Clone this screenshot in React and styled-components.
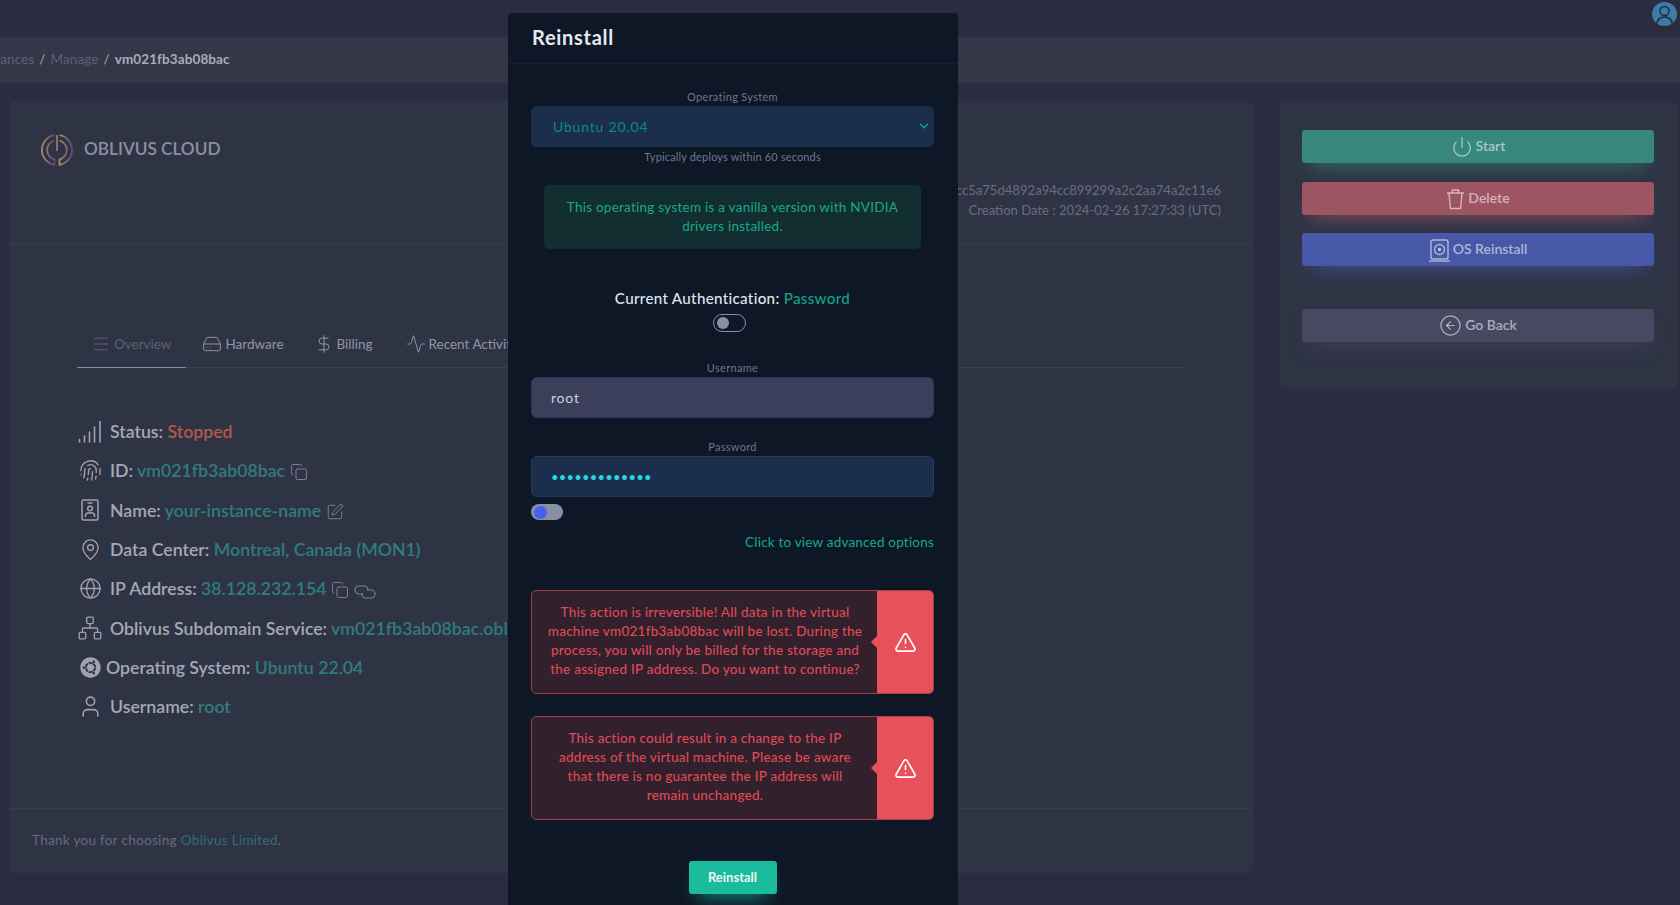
import React from 'react';
import styled, {createGlobalStyle} from 'styled-components';
import {
   Menu, HardDrive, DollarSign, Activity, Copy, SquarePen, MapPin, Globe, Network,
   User, Power, CircleArrowLeft, TriangleAlert, ChevronDown, Fingerprint
} from 'lucide-react';
import {FaUbuntu} from 'react-icons/fa';

const GlobalStyle = createGlobalStyle`
   html, body {
      margin: 0;
      padding: 0;
      background: #2a2c3e;
      font-family: Lato, 'Open Sans', sans-serif;
   }
   * {
      box-sizing: border-box;
   }
`;

const Page = styled.div`
   position: relative;
   width: 1680px;
   height: 905px;
   overflow: hidden;
   background: #2b2c3f;
`;

const TopBar = styled.header`
   display: flex;
   justify-content: flex-end;
   align-items: flex-start;
   height: 37px;
   padding: 2px 3px 0 0;
`;

const Avatar = styled.div`
   display: flex;
   justify-content: center;
   align-items: center;
   width: 25px;
   height: 24px;
   border-radius: 50%;
   overflow: hidden;
   background: #3b7ba6;
   color: #25293a;
`;

const Crumbs = styled.nav`
   display: flex;
   align-items: center;
   gap: 5px;
   height: 46px;
   margin-bottom: 18px;
   padding-bottom: 3px;
   background: #353648;
   font-size: 13.5px;
   letter-spacing: 0.1px;
   color: #a5a8b5;
`;

const Crumb = styled.span`
   color: ${p => p.$current ? '#a9acb9' : '#5d6073'};
   font-weight: ${p => p.$current ? 700 : 400};
   &:first-child {
      margin-left: -22px;
   }
`;

const Columns = styled.main`
   display: flex;
   gap: 27px;
   padding-left: 9px;
`;

const MainCard = styled.section`
   display: flex;
   flex-direction: column;
   width: 1244px;
   height: 772px;
   border-radius: 6px;
   background: #2f3445;
`;

const CardHead = styled.div`
   display: flex;
   justify-content: space-between;
   height: 144px;
   padding: 33px 32px 0 32px;
   border-bottom: 1px solid #363c4f;
`;

const Brand = styled.div`
   display: flex;
   align-items: center;
   gap: 11px;
   height: 32px;
   font-size: 17.2px;
   font-weight: 600;
   color: #8c90a0;
`;

const BrandName = styled.span`
   margin-bottom: 4px;
`;

const HeadMeta = styled.div`
   display: flex;
   flex-direction: column;
   align-items: flex-end;
   gap: 4px;
   padding-top: 48px;
   font-size: 13.1px;
   line-height: 16px;
   color: #6a6d80;
`;

const CardBody = styled.div`
   flex: 1;
   padding: 76px 68px 0 68px;
`;

const Tabs = styled.div`
   display: flex;
   height: 47px;
   border-bottom: 1px solid #3a3f52;
`;

const Tab = styled.div`
   display: flex;
   align-items: center;
   gap: 3px;
   height: 47px;
   padding: 0 15px 0 ${p => p.$active ? 14 : 15}px;
   margin-right: ${p => p.$after || 0}px;
   font-size: 13.5px;
   white-space: nowrap;
   color: ${p => p.$active ? '#5b6072' : '#9094a4'};
   border-bottom: 1px solid ${p => p.$active ? '#888ea8' : 'transparent'};
`;

const Rows = styled.div`
   margin: 44px 0 0 -1px;
   display: flex;
   flex-direction: column;
`;

const Row = styled.div`
   display: flex;
   align-items: center;
   gap: ${p => p.$tight ? 2 : 6}px;
   height: 39.3px;
   font-size: 17.7px;
   font-weight: 600;
   white-space: nowrap;
   color: #a5a9b6;
`;

const RowIcon = styled.span`
   display: flex;
   justify-content: center;
   align-items: center;
   width: 28px;
   color: #9ea2b2;
`;

const Value = styled.span`
   color: ${p => p.$stopped ? '#b5584b' : '#2f7d7a'};
`;

const Action = styled.span`
   display: inline-flex;
   margin-left: 5px;
   vertical-align: -4px;
   color: #7d8192;
`;

const CardFoot = styled.footer`
   display: flex;
   align-items: center;
   height: 65px;
   padding: 0 0 2px 23px;
   border-top: 1px solid #363c4f;
   font-size: 13.5px;
   letter-spacing: 0.3px;
   color: #666a7d;
`;

const FootLink = styled.span`
   margin-left: 4px;
   color: #2f6f72;
`;

const SideCard = styled.aside`
   display: flex;
   flex-direction: column;
   width: 397px;
   height: 288px;
   padding: 29px 23px 0 22px;
   border-radius: 6px;
   background: #2f3445;
`;

const ActionButton = styled.div`
   display: flex;
   justify-content: center;
   align-items: center;
   gap: 3px;
   height: 33px;
   margin-bottom: ${p => p.$after}px;
   border-radius: 3px;
   background: ${p => p.$color};
   box-shadow: 0 10px 20px -10px ${p => p.$color};
   font-size: 14px;
   font-weight: 600;
   color: rgba(255, 255, 255, 0.56);
`;

const ButtonText = styled.span`
   margin-bottom: 2px;
`;

const Overlay = styled.div`
   position: absolute;
   top: 13px;
   left: 508px;
   width: 450px;
   height: 900px;
   border-radius: 4px 4px 0 0;
   background: #0e1726;
`;

const ModalHead = styled.div`
   display: flex;
   align-items: center;
   height: 51px;
   padding: 0 0 3px 24px;
   border-bottom: 1px solid #191e3a;
   font-size: 20px;
   font-weight: 700;
   letter-spacing: 0.7px;
   color: #e6e9ef;
`;

const ModalBody = styled.div`
   display: flex;
   flex-direction: column;
   padding: 0 24px 0 23px;
`;

const FieldLabel = styled.label`
   display: block;
   margin-top: ${p => p.$top}px;
   height: 16px;
   font-size: 11px;
   line-height: 14px;
   letter-spacing: 0.3px;
   text-align: center;
   color: #6f7690;
`;

const SelectWrap = styled.div`
   position: relative;
   height: 41px;
`;

const OsSelect = styled.select`
   appearance: none;
   width: 100%;
   height: 41px;
   padding-left: 22px;
   border: none;
   border-radius: 6px;
   outline: none;
   background: #1b2e4b;
   font-family: inherit;
   font-size: 14px;
   letter-spacing: 0.8px;
   color: #0e8a83;
`;

const Chevron = styled.span`
   position: absolute;
   top: 13px;
   right: 3px;
   display: flex;
   color: #0e9a8e;
`;

const Helper = styled.div`
   margin-top: 2px;
   height: 16px;
   font-size: 11px;
   line-height: 15px;
   letter-spacing: 0.15px;
   text-align: center;
   color: #6f7690;
`;

const GreenNote = styled.div`
   display: flex;
   align-items: center;
   margin: 20px 13px 0 13px;
   height: 64px;
   padding: 0 10px;
   border-radius: 5px;
   background: #122e30;
   font-size: 13.5px;
   line-height: 19px;
   letter-spacing: 0.25px;
   text-align: center;
   color: #19a88c;
`;

const AuthLine = styled.div`
   margin-top: 39px;
   height: 20px;
   font-size: 15.2px;
   font-weight: 500;
   line-height: 20px;
   letter-spacing: 0.3px;
   text-align: center;
   color: #e0e6ed;
`;

const AuthValue = styled.span`
   color: #17a085;
`;

const Toggle = styled.div`
   display: flex;
   align-items: center;
   width: ${p => p.$wide ? 32 : 33}px;
   height: ${p => p.$wide ? 16 : 18}px;
   padding-left: 3px;
   border-radius: 9px;
   border: ${p => p.$wide ? 'none' : '1px solid #888ea8'};
   background: ${p => p.$wide ? '#888ea8' : 'transparent'};
   align-self: ${p => p.$wide ? 'flex-start' : 'center'};
   margin-top: ${p => p.$top}px;
   margin-right: ${p => p.$wide ? 0 : 7}px;
`;

const Knob = styled.span`
   width: ${p => p.$wide ? 13 : 12}px;
   height: ${p => p.$wide ? 13 : 12}px;
   border-radius: 50%;
   background: ${p => p.$wide ? '#4361ee' : '#888ea8'};
`;

const TextInput = styled.input`
   display: block;
   width: 100%;
   height: 41px;
   padding-left: 19px;
   border-radius: 6px;
   border: 1px solid #253b5c;
   outline: none;
   background: ${p => p.$filled ? '#3b3f5c' : '#1b2e4b'};
   font-family: inherit;
   font-size: ${p => p.$filled ? 14 : 13}px;
   letter-spacing: ${p => p.$filled ? 0.8 : 0.2}px;
   color: ${p => p.$filled ? '#d0d2d6' : '#25d5e4'};
`;

const AdvancedLink = styled.div`
   margin-top: 13px;
   height: 18px;
   font-size: 13.5px;
   line-height: 18px;
   letter-spacing: 0.2px;
   text-align: right;
   color: #19a88c;
`;

const Alert = styled.div`
   position: relative;
   display: flex;
   height: 104px;
   margin-top: ${p => p.$top}px;
   border: 1px solid #a03e49;
   border-radius: 5px;
   overflow: hidden;
   background: #33202d;
`;

const AlertText = styled.div`
   flex: 1;
   display: flex;
   align-items: center;
   justify-content: center;
   padding: 0 14px 2px 14px;
   font-size: 13.5px;
   font-weight: 500;
   line-height: 19px;
   letter-spacing: 0.25px;
   text-align: center;
   color: #de4a54;
`;

const AlertIcon = styled.div`
   position: relative;
   display: flex;
   justify-content: center;
   align-items: center;
   width: 57px;
   margin: -1px;
   background: #e7515a;
   color: #fff;
   &::before {
      content: '';
      position: absolute;
      left: -6px;
      top: 46px;
      border-top: 6px solid transparent;
      border-bottom: 6px solid transparent;
      border-right: 6px solid #e7515a;
   }
`;

const ReinstallButton = styled.button`
   align-self: center;
   width: 88px;
   height: 33px;
   margin-top: 41px;
   padding: 0 0 2px 0;
   border: none;
   border-radius: 3px;
   background: #1abc9c;
   box-shadow: 0 10px 20px -10px #1abc9c;
   font-family: inherit;
   font-size: 13px;
   font-weight: 700;
   color: #eef6f4;
`;

// line icons the packages don't have in this shape
const SignalBars = () => (
   <svg width="24" height="24" viewBox="0 0 24 24" fill="none" stroke="currentColor" strokeWidth="1.6" strokeLinecap="round">
      <path d="M1.5 22v-2.5M6.5 22v-6M11.5 22v-10M16.5 22V7M22 22V1.5"/>
   </svg>
);

const BadgeIcon = () => (
   <svg width="18" height="22" viewBox="0 0 18 22" fill="none" stroke="currentColor" strokeWidth="1.5">
      <rect x="1" y="1" width="16" height="20" rx="1.5"/>
      <path d="M7 4h4" strokeLinecap="round"/>
      <circle cx="9" cy="9.5" r="2.3"/>
      <path d="M4.5 18v-1.5c0-1.6 1.5-2.7 4.5-2.7s4.5 1.1 4.5 2.7V18"/>
   </svg>
);

const LinkOvals = () => (
   <svg width="22" height="14" viewBox="0 0 22 14" fill="none" stroke="currentColor" strokeWidth="1.2">
      <path d="M9 9H5a4 4 0 0 1 0-8h5a4 4 0 0 1 4 4"/>
      <path d="M13 5h4a4 4 0 0 1 0 8h-5a4 4 0 0 1-4-4"/>
   </svg>
);

const TrashCup = () => (
   <svg width="19" height="22" viewBox="0 0 19 22" fill="none" stroke="currentColor" strokeWidth="1.4">
      <path d="M1 5h17M6.5 5V2h6v3M3 5l1.4 15.5h10.2L16 5"/>
   </svg>
);

const DiskIcon = () => (
   <svg width="21" height="24" viewBox="0 0 21 24" fill="none" stroke="currentColor" strokeWidth="1.4">
      <rect x="2" y="2" width="17" height="19" rx="2"/>
      <circle cx="10.5" cy="11.5" r="5"/>
      <circle cx="10.5" cy="11.5" r="1" fill="currentColor"/>
      <path d="M0 23h21"/>
   </svg>
);

const PersonBust = () => (
   <svg width="25" height="24" viewBox="0 0 25 24" fill="none" stroke="currentColor" strokeWidth="1.5">
      <circle cx="12.5" cy="9" r="4.6"/>
      <path d="M4.5 23c0-5 3.5-8 8-8s8 3 8 8"/>
   </svg>
);

const Logo = () => (
   <svg width="32" height="32" viewBox="0 0 32 32" fill="none" strokeWidth="1.8">
      <defs>
         <linearGradient id="logoFade" x1="0" x2="1" y1="0" y2="0">
            <stop offset="0" stopColor="#b08a5c"/>
            <stop offset="1" stopColor="#5e4a7c"/>
         </linearGradient>
      </defs>
      <g stroke="url(#logoFade)">
         <path d="M13.5 1.2A15 15 0 0 0 13.5 30.8V25.5A9.8 9.8 0 0 1 13.5 6.5"/>
         <path d="M18.5 1.2A15 15 0 0 1 18.5 30.8V25.5A9.8 9.8 0 0 0 18.5 6.5"/>
      </g>
      <path d="M16 1v16" stroke="#8c7a78"/>
   </svg>
);

const App = () => {
   return (
      <Page>
         <GlobalStyle/>
         <TopBar>
            <Avatar><PersonBust/></Avatar>
         </TopBar>
         <Crumbs>
            <Crumb>Instances</Crumb>
            <span>/</span>
            <Crumb>Manage</Crumb>
            <span>/</span>
            <Crumb $current>vm021fb3ab08bac</Crumb>
         </Crumbs>
         <Columns>
            <MainCard>
               <CardHead>
                  <Brand><Logo/><BrandName>OBLIVUS CLOUD</BrandName></Brand>
                  <HeadMeta>
                     <span>7cc5a75d4892a94cc899299a2c2aa74a2c11e6</span>
                     <span>Creation Date : 2024-02-26 17:27:33 (UTC)</span>
                  </HeadMeta>
               </CardHead>
               <CardBody>
                  <Tabs>
                     <Tab $active $after={1}><Menu size={20} strokeWidth={1.2}/>Overview</Tab>
                     <Tab><HardDrive size={20} strokeWidth={1.2}/>Hardware</Tab>
                     <Tab $after={3}><DollarSign size={20} strokeWidth={1.2}/>Billing</Tab>
                     <Tab><Activity size={20} strokeWidth={1.2}/>Recent Activity</Tab>
                  </Tabs>
                  <Rows>
                     <Row><RowIcon><SignalBars/></RowIcon><span>Status: <Value $stopped>Stopped</Value></span></Row>
                     <Row><RowIcon><Fingerprint size={23} strokeWidth={1.4}/></RowIcon><span>ID: <Value>vm021fb3ab08bac</Value><Action><Copy size={18} strokeWidth={1.3}/></Action></span></Row>
                     <Row><RowIcon><BadgeIcon/></RowIcon><span>Name: <Value>your-instance-name</Value><Action><SquarePen size={18} strokeWidth={1.3}/></Action></span></Row>
                     <Row><RowIcon><MapPin size={23} strokeWidth={1.4}/></RowIcon><span>Data Center: <Value>Montreal, Canada (MON1)</Value></span></Row>
                     <Row><RowIcon><Globe size={23} strokeWidth={1.4}/></RowIcon><span>IP Address: <Value>38.128.232.154</Value><Action><Copy size={18} strokeWidth={1.3}/></Action><Action><LinkOvals/></Action></span></Row>
                     <Row><RowIcon><Network size={26} strokeWidth={1.2}/></RowIcon><span>Oblivus Subdomain Service: <Value>vm021fb3ab08bac.oblivus.cloud</Value></span></Row>
                     <Row $tight><RowIcon><FaUbuntu size={21}/></RowIcon><span>Operating System: <Value>Ubuntu 22.04</Value></span></Row>
                     <Row><RowIcon><User size={25} strokeWidth={1.5}/></RowIcon><span>Username: <Value>root</Value></span></Row>
                  </Rows>
               </CardBody>
               <CardFoot>Thank you for choosing<FootLink>Oblivus Limited</FootLink>.</CardFoot>
            </MainCard>
            <SideCard>
               <ActionButton $color="#38877c" $after={19}><Power size={22} strokeWidth={1.4}/><ButtonText>Start</ButtonText></ActionButton>
               <ActionButton $color="#9d5463" $after={18}><TrashCup/><ButtonText>Delete</ButtonText></ActionButton>
               <ActionButton $color="#4858a8" $after={43}><DiskIcon/><ButtonText>OS Reinstall</ButtonText></ActionButton>
               <ActionButton $color="#474862"><CircleArrowLeft size={23} strokeWidth={1.3}/><ButtonText>Go Back</ButtonText></ActionButton>
            </SideCard>
         </Columns>
         <Overlay>
            <ModalHead>Reinstall</ModalHead>
            <ModalBody>
               <FieldLabel $top={26}>Operating System</FieldLabel>
               <SelectWrap>
                  <OsSelect defaultValue="Ubuntu 20.04">
                     <option>Ubuntu 20.04</option>
                     <option>Ubuntu 22.04</option>
                  </OsSelect>
                  <Chevron><ChevronDown size={14} strokeWidth={3}/></Chevron>
               </SelectWrap>
               <Helper>Typically deploys within 60 seconds</Helper>
               <GreenNote>This operating system is a vanilla version with NVIDIA drivers installed.</GreenNote>
               <AuthLine>Current Authentication: <AuthValue>Password</AuthValue></AuthLine>
               <Toggle $top={6}><Knob/></Toggle>
               <FieldLabel $top={29}>Username</FieldLabel>
               <TextInput $filled defaultValue="root"/>
               <FieldLabel $top={22}>Password</FieldLabel>
               <TextInput type="password" defaultValue="abcdefghijklm"/>
               <Toggle $wide $top={7}><Knob $wide/></Toggle>
               <AdvancedLink>Click to view advanced options</AdvancedLink>
               <Alert $top={39}>
                  <AlertText>This action is irreversible! All data in the virtual machine vm021fb3ab08bac will be lost. During the process, you will only be billed for the storage and the assigned IP address. Do you want to continue?</AlertText>
                  <AlertIcon><TriangleAlert size={23} strokeWidth={1.7}/></AlertIcon>
               </Alert>
               <Alert $top={22}>
                  <AlertText>This action could result in a change to the IP address of the virtual machine. Please be aware that there is no guarantee the IP address will remain unchanged.</AlertText>
                  <AlertIcon><TriangleAlert size={23} strokeWidth={1.7}/></AlertIcon>
               </Alert>
               <ReinstallButton>Reinstall</ReinstallButton>
            </ModalBody>
         </Overlay>
      </Page>
   )
}

export default App;
